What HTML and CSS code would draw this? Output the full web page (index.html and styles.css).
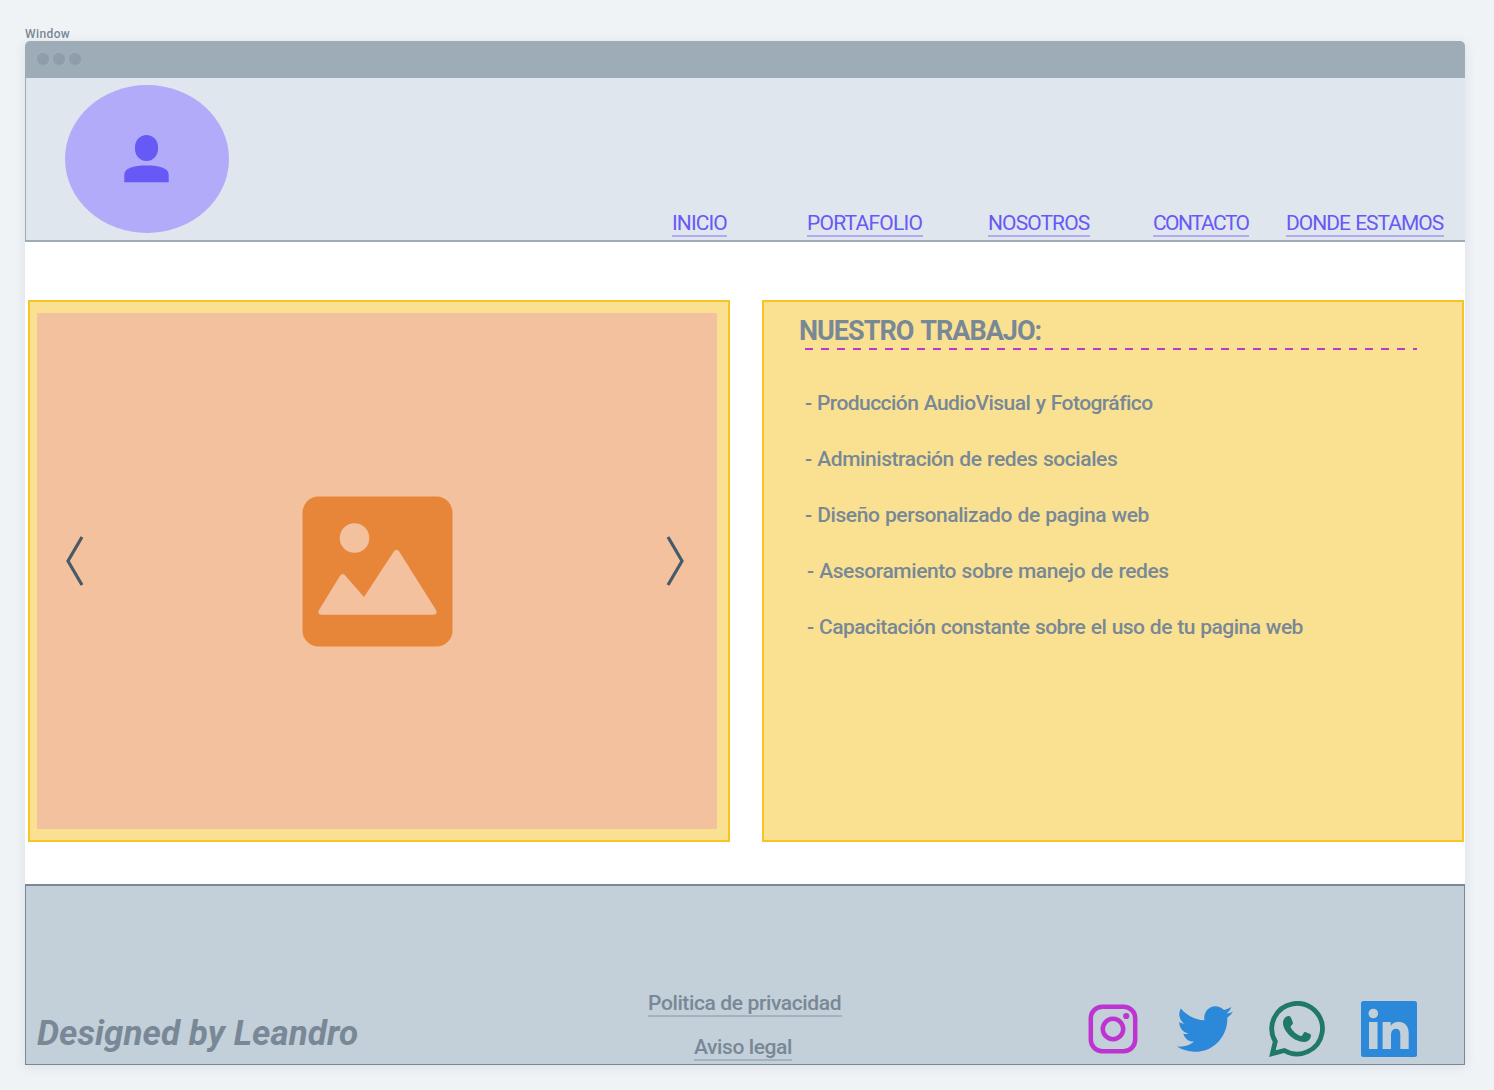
FILE: index.html
```html
<!DOCTYPE html>
<html lang="es">
<head>
<meta charset="utf-8">
<title>Window</title>
<link rel="stylesheet" href="styles.css">
</head>
<body>
<div class="caption"><span>Window</span></div>
<div class="window">
  <div class="titlebar"><i class="dot"></i><i class="dot"></i><i class="dot"></i></div>
  <header class="header">
    <div class="avatar">
      <svg width="46" height="50" viewBox="0 0 46 50"><rect x="12" y="1" width="23" height="26" rx="11.5" ry="12"/><path d="M1.300 48.300V41C1.300 34 10 31.500 23.500 31.500S45.700 34 45.700 41V48.300Z"/></svg>
    </div>
    <nav class="nav">
      <a class="link inicio"><span>INICIO</span></a>
      <a class="link portafolio"><span>PORTAFOLIO</span></a>
      <a class="link nosotros"><span>NOSOTROS</span></a>
      <a class="link contacto"><span>CONTACTO</span></a>
      <a class="link donde"><span>DONDE ESTAMOS</span></a>
    </nav>
  </header>
  <main class="main">
    <section class="panel gallery">
      <div class="slide">
        <svg class="arrow" width="20" height="52" viewBox="0 0 20 52"><path d="M17 2L3 26L17 50"/></svg>
        <svg class="image" width="151" height="151" viewBox="0 0 151 151">
          <rect class="frame" x=".5" y=".5" width="150" height="150" rx="16"/>
          <circle class="cut" cx="52.500" cy="42" r="14.800"/>
          <path class="cut" d="M16.700 114.500L38 79.800Q40.500 76.500 43.200 79.500L62 101L91.800 55.500Q94.500 52 97.200 55.500L134 114Q136 118.500 131.500 118.700H19.500Q15.200 118 16.700 114.500Z"/>
        </svg>
        <svg class="arrow" width="20" height="52" viewBox="0 0 20 52"><path d="M3 2L17 26L3 50"/></svg>
      </div>
    </section>
    <section class="panel work">
      <h1 class="heading"><span>NUESTRO TRABAJO:</span></h1>
      <div class="dashes"></div>
      <ul class="list">
        <li class="t1">- Producción AudioVisual y Fotográfico</li>
        <li class="t2">- Administración de redes sociales</li>
        <li class="t3">- Diseño personalizado de pagina web</li>
        <li class="t4 shifted">- Asesoramiento sobre manejo de redes</li>
        <li class="t5 shifted">- Capacitación constante sobre el uso de tu pagina web</li>
      </ul>
    </section>
  </main>
  <footer class="footer">
    <div class="credit">Designed by Leandro</div>
    <div class="legal">
      <a class="link muted privacy"><span>Politica de privacidad</span></a>
      <a class="link muted aviso"><span>Aviso legal</span></a>
    </div>
    <div class="social">
      <svg class="instagram" width="56" height="56" viewBox="0 0 56 56"><rect x="5.800" y="5.800" width="44.400" height="44.400" rx="11.500"/><circle cx="28" cy="28" r="10.200"/><circle class="lens" cx="41.200" cy="15" r="3.100"/></svg>
      <svg class="twitter" width="56" height="56" viewBox="0 0 24 24"><path d="M23.953 4.570a10 10 0 01-2.825.775 4.958 4.958 0 002.163-2.723c-.951.555-2.005.959-3.127 1.184a4.920 4.920 0 00-8.384 4.482C7.690 8.095 4.067 6.130 1.640 3.162a4.822 4.822 0 00-.666 2.475c0 1.710.870 3.213 2.188 4.096a4.904 4.904 0 01-2.228-.616v.060a4.923 4.923 0 003.946 4.827 4.996 4.996 0 01-2.212.085 4.936 4.936 0 004.604 3.417 9.867 9.867 0 01-6.102 2.105c-.390 0-.779-.023-1.170-.067a13.995 13.995 0 007.557 2.209c9.053 0 13.998-7.496 13.998-13.985 0-.210 0-.420-.015-.630A9.935 9.935 0 0024 4.590z"/></svg>
      <svg class="whatsapp" width="56" height="56" viewBox="0 0 56 56"><path class="ring" d="M3.400 52.600L6.300 40.500A25.300 25.300 0 1 1 15.300 49.500Z"/><path d="M19.500 15C17 15 14 18 14 22C14 28 22 40.500 35.500 41C39 41 42 38 42 34C42 33.300 41 32.800 36 31C34.500 30.500 34.500 34.500 32 35C28 34 23.500 30 21.500 26C21.300 25 24 23.500 24 22C22 16.500 21.800 15 19.500 15Z"/></svg>
      <svg class="linkedin" width="56" height="56" viewBox="0 0 56 56"><rect width="56" height="56" rx="2.500"/><g class="cut"><circle cx="12.300" cy="12.500" r="4.800"/><rect x="8" y="21" width="8.500" height="27"/><path d="M21.600 21H29.700V24.700C33.500 18.500 47.700 18.500 47.700 32V48H39.300V34.500C39.300 31 38.700 27.700 35 27.700S30 31 30 34.500V48H21.600Z"/></g></svg>
    </div>
  </footer>
</div>
</body>
</html>
```
FILE: styles.css
```css
* { box-sizing: border-box; }
body {
  margin: 0;
  height: 1090px;
  padding: 26px 29px 0 25px;
  background: #eff3f6;
  font-family: Roboto, "Liberation Sans", sans-serif;
  color: #788896;
  overflow: hidden;
}
svg { display: block; flex: none; }
.caption { height: 15px; font-size: 12px; line-height: 17px; font-weight: 500; letter-spacing: .4px; }
.window {
  width: 1440px;
  height: 1024px;
  display: flex;
  flex-direction: column;
  background: #fff;
  border-radius: 5px 5px 0 0;
  box-shadow: 0 2px 12px rgba(60, 70, 90, .1);
}
.titlebar {
  height: 37px;
  display: flex;
  gap: 4px;
  padding: 12px;
  background: #9eacb8;
  border-radius: 5px 5px 0 0;
}
.dot { width: 12px; height: 12px; border-radius: 50%; background: #8e9dab; }
.header {
  height: 164px;
  display: flex;
  justify-content: space-between;
  align-items: flex-end;
  padding: 0 21px 3px 39px;
  background: #dfe6ed;
  border-left: 1px solid #9eacb8;
  border-bottom: 2px solid #9eacb8;
}
.avatar {
  width: 164px;
  height: 148px;
  margin-bottom: 4px;
  padding-right: 2px;
  border-radius: 50%;
  background: #b2abfa;
  display: flex;
  justify-content: center;
  align-items: center;
  fill: #6759f5;
}
.nav { display: flex; }
.link {
  display: block;
  height: 28px;
  line-height: 29px;
  font-size: 21px;
  white-space: nowrap;
  color: #6759f5;
  border-bottom: 2px solid #b2abf3;
}
.inicio { width: 55px; margin-right: 80px; letter-spacing: -.9px; }
.portafolio { width: 116px; margin-right: 65px; letter-spacing: -.75px; }
.nosotros { width: 102px; margin-right: 63px; letter-spacing: -.9px; }
.contacto { width: 96px; margin-right: 37px; letter-spacing: -1.6px; }
.donde { width: 158px; letter-spacing: -1px; word-spacing: 1px; }
.main { height: 642px; display: flex; gap: 32px; padding: 58px 1px 0 3px; }
.panel {
  width: 702px;
  height: 542px;
  background: #fae192;
  border: 2px solid #f7c325;
}
.gallery { padding: 11px 11px 11px 7px; }
.slide {
  height: 516px;
  display: flex;
  justify-content: space-between;
  align-items: center;
  padding: 0 32px 0 28px;
  background: #f3c19e;
}
.image { margin: 0 0 0 4px; }
.arrow { margin-top: -20px; fill: none; stroke: #465a69; stroke-width: 3.200; }
.frame { fill: #e78539; }
.image .cut { fill: #f3c19e; }
.work { padding: 12px 45px 0 35px; }
.heading { margin: 0; height: 34px; line-height: 34px; font-size: 27px; font-weight: 700; letter-spacing: -1px; word-spacing: 2px; white-space: nowrap; }
.dashes {
  height: 2px;
  margin-left: 6px;
  background: repeating-linear-gradient(90deg, #bd34d1 0 8px, transparent 8px 16px);
}
.list { list-style: none; margin: 25px 0 0; padding: 0 0 0 6px; font-size: 21px; font-weight: 500; word-spacing: .7px; white-space: nowrap; }
.list li { height: 56px; line-height: 56px; }
.list .shifted { padding-left: 2px; }
.t1 { letter-spacing: -.55px; }
.t2 { letter-spacing: -.42px; }
.t3 { letter-spacing: -.42px; }
.t4 { letter-spacing: -.42px; }
.t5 { letter-spacing: -.53px; }
.footer {
  height: 181px;
  display: grid;
  grid-template-columns: 611px 205px 1fr;
  align-items: end;
  padding: 0 47px 0 11px;
  background: #c3cfd9;
  border: 1px solid #788896;
  border-top-width: 2px;
}
.credit { height: 60px; line-height: 60px; font-size: 35px; font-weight: 700; font-style: italic; letter-spacing: .06px; white-space: nowrap; }
.legal { display: flex; flex-direction: column; align-items: flex-start; gap: 16px; padding: 0 0 3px; }
.muted { color: #788896; font-weight: 500; border-color: #a5b2be; }
.privacy { width: 194px; letter-spacing: -.38px; }
.aviso { width: 98px; margin-left: 46px; letter-spacing: -.4px; }
.social { display: flex; justify-content: flex-end; gap: 36px; padding-bottom: 7px; }
.instagram { fill: none; stroke: #bd34d1; stroke-width: 4.500; }
.instagram .lens { fill: #bd34d1; stroke: none; }
.twitter { fill: #2c88d9; }
.whatsapp { fill: #207868; }
.whatsapp .ring { fill: none; stroke: #207868; stroke-width: 4.800; }
.linkedin { fill: #2c88d9; }
.linkedin .cut { fill: #c3cfd9; }
```
